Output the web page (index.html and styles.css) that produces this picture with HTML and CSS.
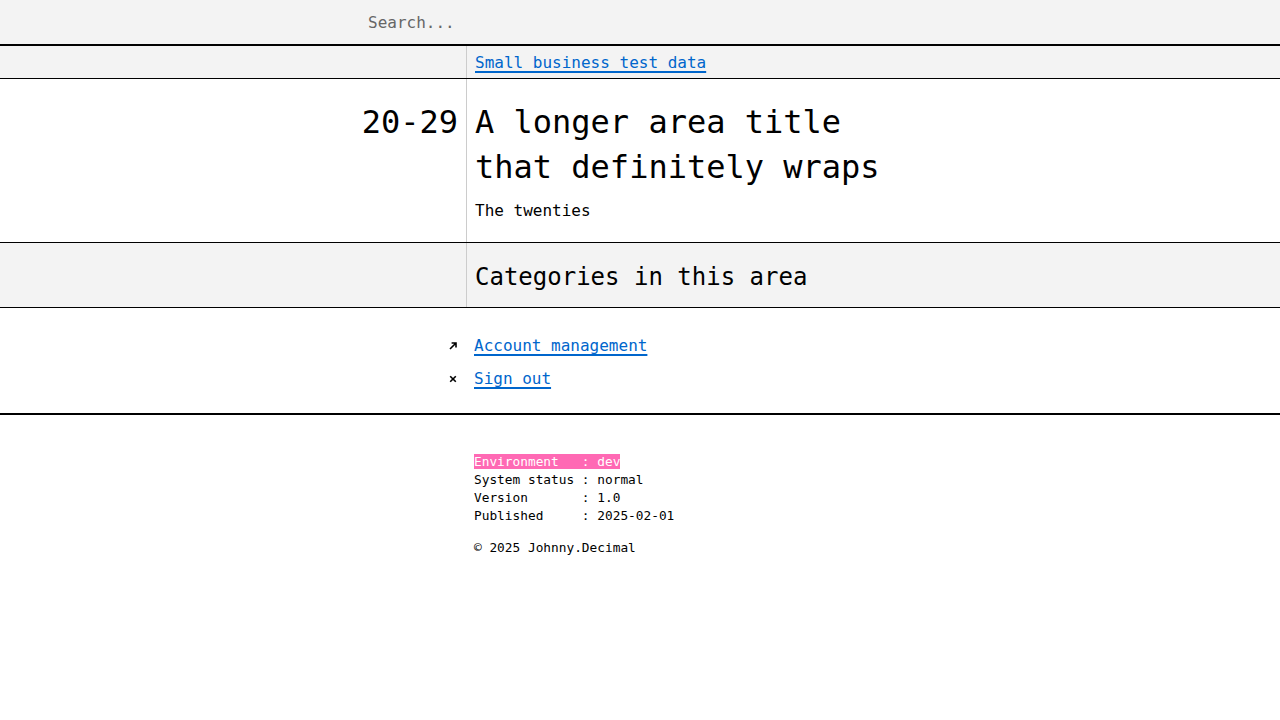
FILE: index.html
```html
<!DOCTYPE html>
<html lang="en">
<head>
<meta charset="utf-8">
<title>20-29 A longer area title that definitely wraps</title>
<link rel="stylesheet" href="styles.css">
</head>
<body>
<header class="topbar">
  <input class="search" type="text" placeholder="Search...">
</header>
<main>
  <div class="row crumbs">
    <div class="cell-left"></div>
    <div class="cell-right"><a href="#">Small business test data</a></div>
  </div>
  <div class="row area">
    <div class="cell-left"><span class="area-num">20-29</span></div>
    <div class="cell-right">
      <h1 class="area-title">A longer area title<br>that definitely wraps</h1>
      <p class="area-desc">The twenties</p>
    </div>
  </div>
  <div class="row section">
    <div class="cell-left"></div>
    <div class="cell-right"><h2 class="section-title">Categories in this area</h2></div>
  </div>
  <ul class="actions">
    <li>
      <span class="icon"><svg width="8" height="8" viewBox="0 0 8 8"><path d="M1 7 L7 1 M2.6 1 H7 V5.4" fill="none" stroke="#000" stroke-width="1.6"/></svg></span>
      <a href="#">Account management</a>
    </li>
    <li>
      <span class="icon"><svg width="8" height="8" viewBox="0 0 8 8"><path d="M1.2 1.2 L6.8 6.8 M6.8 1.2 L1.2 6.8" fill="none" stroke="#000" stroke-width="1.6"/></svg></span>
      <a href="#">Sign out</a>
    </li>
  </ul>
</main>
<footer class="footer">
<pre class="status"><span class="env">Environment   : dev</span>
System status : normal
Version       : 1.0
Published     : 2025-02-01</pre>
<p class="copy">© 2025 Johnny.Decimal</p>
</footer>
</body>
</html>
```
FILE: styles.css
```css
html, body {
  margin: 0;
  padding: 0;
  background: #fff;
  color: #000;
  font-family: "DejaVu Sans Mono", "Liberation Mono", monospace;
  font-size: 16px;
}
a {
  color: #0066cc;
  text-decoration: underline;
  text-decoration-thickness: 2px;
  text-underline-offset: 3px;
}
.topbar {
  height: 44px;
  background: #f3f3f3;
  border-bottom: 2px solid #000;
  display: flex;
  align-items: center;
  padding-left: 360px;
}
.search {
  border: none;
  background: transparent;
  font-family: inherit;
  font-size: 16px;
  padding: 0 8px;
  width: 600px;
  outline: none;
  color: #000;
}
.search::placeholder {
  color: #666;
}
.row {
  display: grid;
  grid-template-columns: 466px 1fr;
  border-bottom: 1px solid #000;
}
.cell-left {
  padding: 0 8px;
  text-align: right;
}
.cell-right {
  border-left: 1px solid #ccc;
  padding: 0 8px;
}
.crumbs {
  background: #f3f3f3;
}
.crumbs .cell-right {
  padding-top: 5px;
  padding-bottom: 3px;
  line-height: 24px;
}
.area .cell-left,
.area .cell-right {
  padding-top: 21px;
  padding-bottom: 19px;
}
.area-num {
  font-size: 32px;
  line-height: 45px;
}
.area-title {
  margin: 0 0 9px;
  font-size: 32px;
  line-height: 45px;
  font-weight: normal;
}
.area-desc {
  margin: 0;
  line-height: 24px;
}
.section {
  background: #f3f3f3;
}
.section .cell-right {
  padding-top: 18px;
  padding-bottom: 14px;
}
.section-title {
  margin: 0;
  font-size: 24px;
  line-height: 32px;
  font-weight: normal;
}
.actions {
  list-style: none;
  margin: 0;
  padding: 26px 0 22px 449px;
  display: flex;
  flex-direction: column;
  gap: 9px;
  border-bottom: 2px solid #000;
}
.actions li {
  display: flex;
  align-items: center;
  line-height: 24px;
}
.icon {
  width: 25px;
  display: flex;
  align-items: center;
}
.icon svg {
  display: block;
}
.footer {
  padding: 38px 0 40px 474px;
}
.status {
  margin: 0;
  font-family: inherit;
  font-size: 12.8px;
  line-height: 18px;
}
.env {
  background: #ff69b4;
  color: #fff;
}
.copy {
  margin: 14px 0 0;
  font-size: 12.8px;
  line-height: 18px;
}
```
